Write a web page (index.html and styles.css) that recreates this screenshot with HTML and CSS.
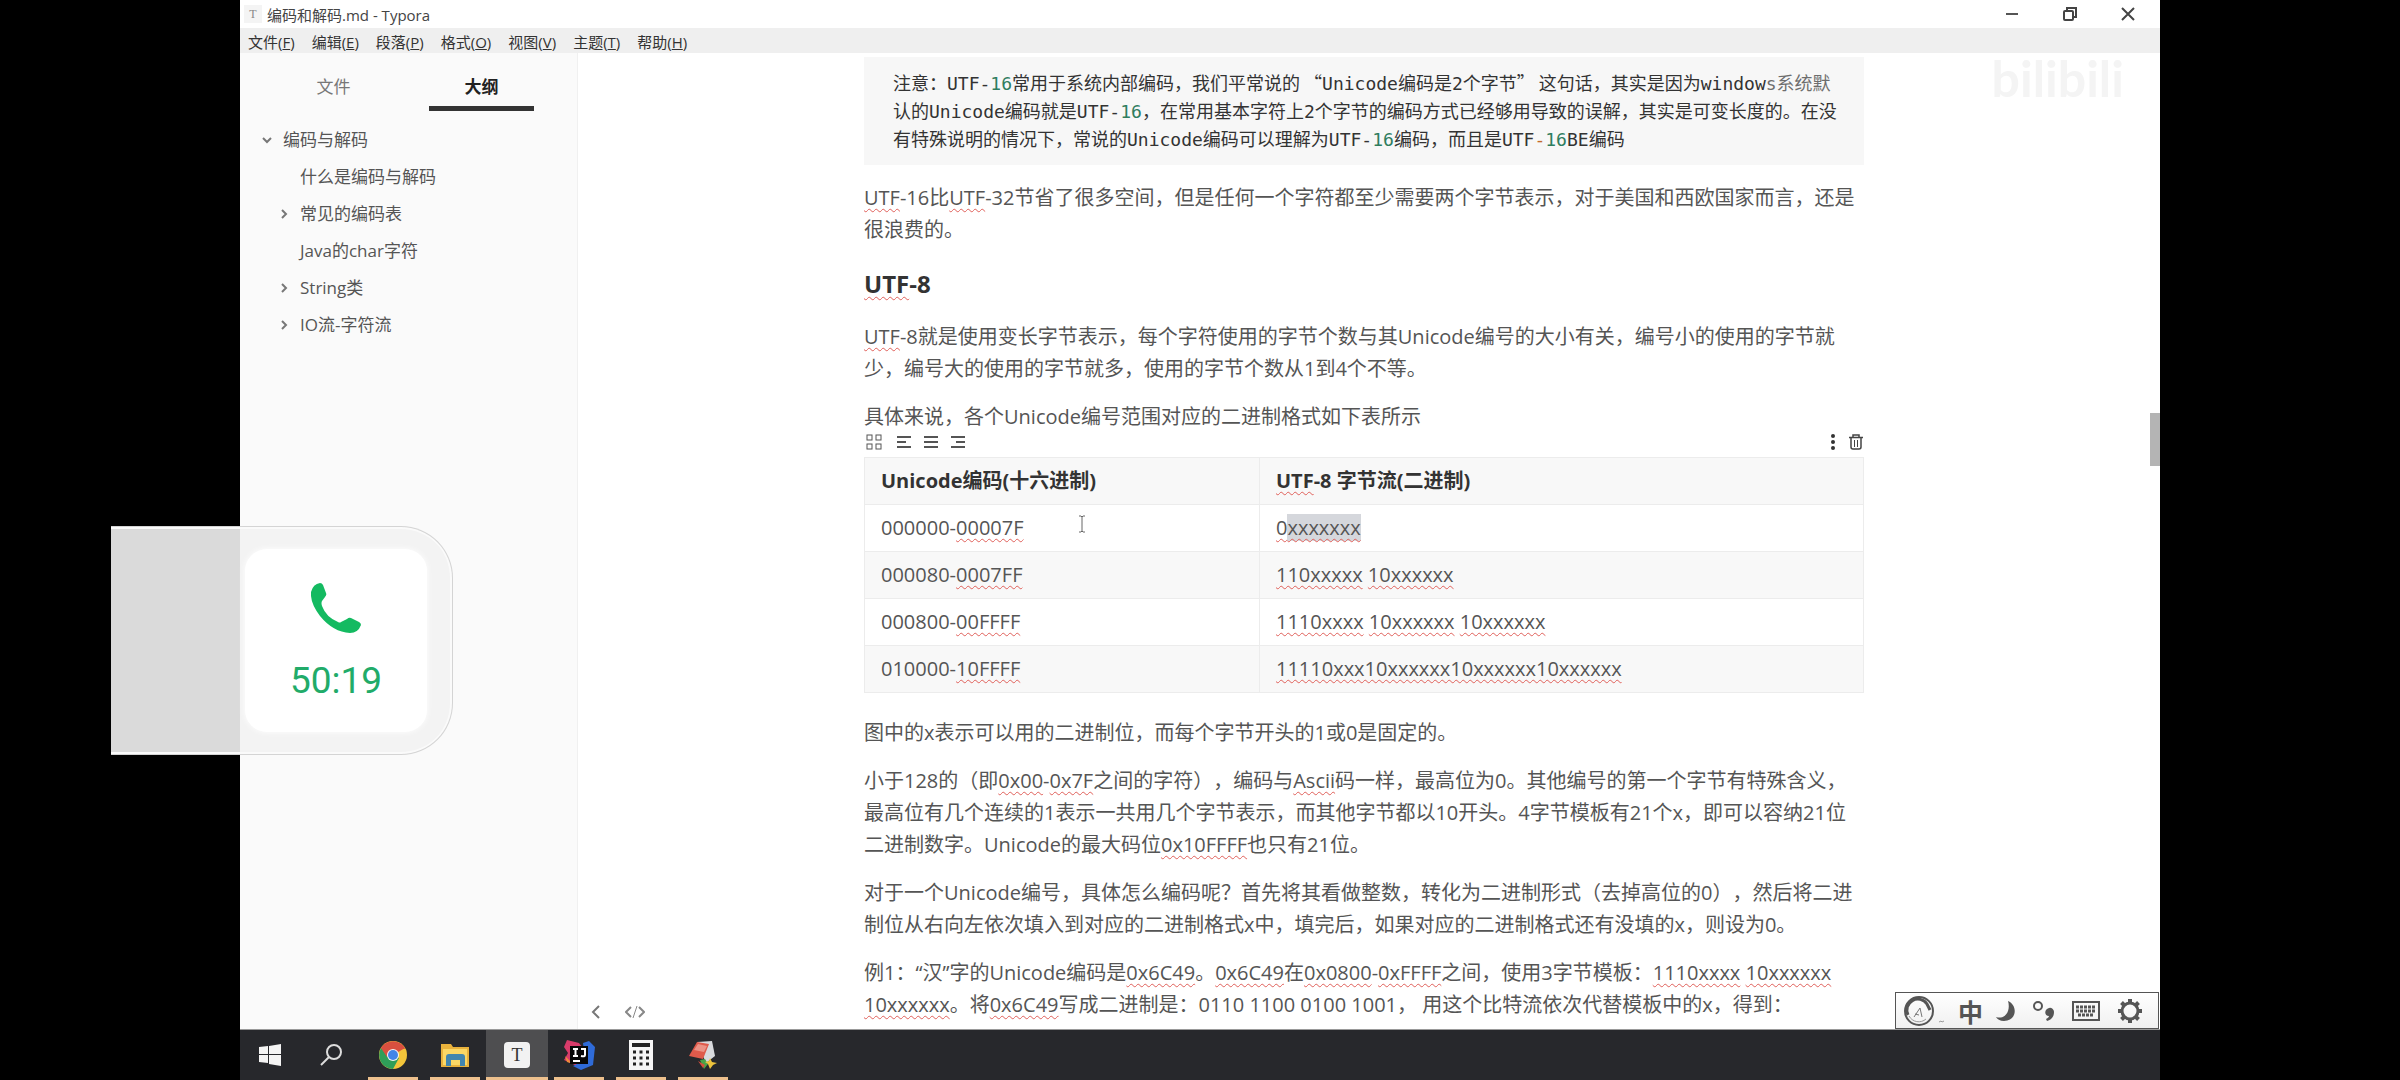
FILE: index.html
```html
<!DOCTYPE html>
<html lang="zh-CN">
<head>
<meta charset="utf-8">
<meta name="viewport" content="width=device-width, initial-scale=1">
<title>编码和解码.md - Typora</title>
<link rel="stylesheet" href="styles.css">
</head>
<body>
<div class="desktop">
  <header class="titlebar">
    <span class="app-icon">T</span>
    <span class="title">编码和解码.md - Typora</span>
    <div class="window-controls">
      <button aria-label="最小化"><svg width="14" height="14" viewBox="0 0 14 14"><path d="M1 7h12" stroke="#555" stroke-width="2"/></svg></button>
      <button aria-label="还原"><svg width="14" height="14" viewBox="0 0 14 14" fill="none" stroke="#444" stroke-width="2"><rect x="1" y="4" width="9" height="9" rx="1"/><path d="M4 4V1h9v9h-3"/></svg></button>
      <button aria-label="关闭"><svg width="14" height="14" viewBox="0 0 14 14"><path d="M1 1l12 12M13 1L1 13" stroke="#444" stroke-width="2"/></svg></button>
    </div>
  </header>
  <nav class="menubar">
    <button>文件(<u>F</u>)</button><button>编辑(<u>E</u>)</button><button>段落(<u>P</u>)</button><button>格式(<u>O</u>)</button><button>视图(<u>V</u>)</button><button>主题(<u>T</u>)</button><button>帮助(<u>H</u>)</button>
  </nav>
  <div class="workspace">
    <aside class="sidebar">
      <div class="tabs">
        <button class="tab">文件</button>
        <button class="tab active">大纲</button>
      </div>
      <nav class="outline">
        <a href="#top"><svg class="chev" viewBox="0 0 10 10"><path d="M1 3l4 4 4-4"/></svg>编码与解码</a>
        <a href="#what" class="child"><span class="chev"></span>什么是编码与解码</a>
        <a href="#tables" class="child"><svg class="chev" viewBox="0 0 10 10"><path d="M3 1l4 4-4 4"/></svg>常见的编码表</a>
        <a href="#char" class="child"><span class="chev"></span>Java的char字符</a>
        <a href="#string" class="child"><svg class="chev" viewBox="0 0 10 10"><path d="M3 1l4 4-4 4"/></svg>String类</a>
        <a href="#io" class="child"><svg class="chev" viewBox="0 0 10 10"><path d="M3 1l4 4-4 4"/></svg>IO流-字符流</a>
      </nav>
    </aside>
    <main class="editor">
      <article class="doc">
        <pre class="code"><code>注意：UTF-<span class="num">16</span>常用于系统内部编码，我们平常说的<span class="quote-open">“</span>Unicode编码是2个字节<span class="quote-close">”</span>这句话，其实是因为window<span class="faded">s系统默</span>认的Unicode编码就是UTF-<span class="num">16</span>，在常用基本字符上2个字节的编码方式已经够用导致的误解，其实是可变长度的。在没有特殊说明的情况下，常说的Unicode编码可以理解为UTF-<span class="num">16</span>编码，而且是UTF<span class="op">-</span><span class="num">16</span>BE编码</code></pre>
        <p><s>UTF</s>-16比<s>UTF</s>-32节省了很多空间，但是任何一个字符都至少需要两个字节表示，对于美国和西欧国家而言，还是很浪费的。</p>
        <h3><s>UTF</s>-8</h3>
        <p><s>UTF</s>-8就是使用变长字节表示，每个字符使用的字节个数与其Unicode编号的大小有关，编号小的使用的字节就少，编号大的使用的字节就多，使用的字节个数从1到4个不等。</p>
        <p class="lead">具体来说，各个Unicode编号范围对应的二进制格式如下表所示</p>
        <div class="table-tools">
          <button aria-label="调整表格"><svg width="16" height="16" viewBox="0 0 16 16" fill="none" stroke="#555" stroke-width="1"><rect x="1" y="1" width="5" height="5"/><rect x="10" y="1" width="5" height="5"/><rect x="1" y="10" width="5" height="5"/><rect x="10" y="10" width="5" height="5"/></svg></button>
          <button class="align-first" aria-label="左对齐"><svg width="16" height="16" viewBox="0 0 16 16" stroke="#555" stroke-width="2"><path d="M1 3h14M1 8h9M1 13h14"/></svg></button>
          <button aria-label="居中"><svg width="16" height="16" viewBox="0 0 16 16" stroke="#555" stroke-width="2"><path d="M1 3h14M1 8h14M1 13h14"/></svg></button>
          <button aria-label="右对齐"><svg width="16" height="16" viewBox="0 0 16 16" stroke="#555" stroke-width="2"><path d="M1 3h14M6 8h9M1 13h14"/></svg></button>
          <span class="spacer"></span>
          <button class="more" aria-label="更多"><svg width="16" height="16" viewBox="0 0 16 16" fill="#333"><circle cx="8" cy="2" r="2"/><circle cx="8" cy="8" r="2"/><circle cx="8" cy="14" r="2"/></svg></button>
          <button aria-label="删除表格"><svg width="16" height="16" viewBox="0 0 16 16" fill="none" stroke="#444"><path d="M1 3.500h14M5 3V1h6v2" stroke-width="1.500"/><path d="M3 4v9q0 2 2 2h6q2 0 2-2V4" stroke-width="1.500"/><path d="M6.500 6v7M9.500 6v7"/></svg></button>
        </div>
        <table>
          <thead><tr><th>Unicode编码(十六进制)</th><th><s>UTF</s>-8 字节流(二进制)</th></tr></thead>
          <tbody>
            <tr><td>000000-<s>00007F</s><svg class="ibeam" width="8" height="18" viewBox="0 0 8 18" fill="none" stroke="#666"><path d="M1 1h2l1 1 1-1h2M4 2v14M1 17h2l1-1 1 1h2"/></svg></td><td><s>0<mark>xxxxxxx</mark></s></td></tr>
            <tr><td>000080-<s>0007FF</s></td><td><s>110xxxxx</s> <s>10xxxxxx</s></td></tr>
            <tr><td>000800-<s>00FFFF</s></td><td><s>1110xxxx</s> <s>10xxxxxx</s> <s>10xxxxxx</s></td></tr>
            <tr><td>010000-<s>10FFFF</s></td><td><s>11110xxx10xxxxxx10xxxxxx10xxxxxx</s></td></tr>
          </tbody>
        </table>
        <p>图中的x表示可以用的二进制位，而每个字节开头的1或0是固定的。</p>
        <p>小于128的（即<s>0x00</s>-<s>0x7F</s>之间的字符），编码与<s>Ascii</s>码一样，最高位为0。其他编号的第一个字节有特殊含义，最高位有几个连续的1表示一共用几个字节表示，而其他字节都以10开头。4字节模板有21个x，即可以容纳21位二进制数字。Unicode的最大码位<s>0x10FFFF</s>也只有21位。</p>
        <p>对于一个Unicode编号，具体怎么编码呢？首先将其看做整数，转化为二进制形式（去掉高位的0），然后将二进制位从右向左依次填入到对应的二进制格式x中，填完后，如果对应的二进制格式还有没填的x，则设为0。</p>
        <p>例1：“汉”字的Unicode编码是<s>0x6C49</s>。<s>0x6C49</s>在<s>0x0800</s>-<s>0xFFFF</s>之间，使用3字节模板：<s>1110xxxx</s> <s>10xxxxxx</s> <s>10xxxxxx</s>。将<s>0x6C49</s>写成二进制是：0110 1100 0100 1001， 用这个比特流依次代替模板中的x，得到：</p>
      </article>
      <div class="scrollbar"><span class="thumb"></span></div>
      <div class="status">
        <button aria-label="收起侧边栏"><svg width="10" height="14" viewBox="0 0 10 14" fill="none" stroke="#777" stroke-width="2"><path d="M8 1L2 7l6 6"/></svg></button>
        <button aria-label="源代码模式"><svg width="20" height="14" viewBox="0 0 20 14" fill="none" stroke="#888" stroke-width="2"><path d="M6 2L1 7l5 5M14 2l5 5-5 5"/><path d="M12 1L8 13" stroke-width="1"/></svg></button>
      </div>
      <div class="watermark">bilibili</div>
      <div class="ime">
        <svg width="44" height="30" viewBox="0 0 44 30" fill="none" stroke="#555"><circle cx="18" cy="15" r="14" stroke-width="2"/><path d="M7 19a11 11 0 0 1 19-11l3 6" stroke-width="3"/><path d="M8 20a11 11 0 0 0 17 3" stroke="#999"/><path d="M13 21l6-9 2 9M14 18l4 1" stroke="#777"/><path d="M38 26l2-1 1 1 2-1" stroke="#999"/></svg>
        <span class="ime-lang">中</span>
        <svg width="20" height="22" viewBox="0 0 20 22" fill="#555"><path d="M12 1c10 4 9 20-4 20-4 0-7-2-8-4 9 3 15-6 12-16z"/></svg>
        <svg width="22" height="22" viewBox="0 0 22 22"><circle cx="5" cy="6" r="4" fill="none" stroke="#555" stroke-width="2"/><path d="M16 8a4 4 0 0 1 5 4c0 5-3 8-7 9l-1-2c2-1 3-2 3-3-5 0-5-7 0-8z" fill="#555"/></svg>
        <svg width="28" height="20" viewBox="0 0 28 20" fill="none" stroke="#555"><rect x="1" y="1" width="26" height="18" stroke-width="2"/><path d="M4 6h20M4 10h20M6 14h16" stroke-width="3" stroke-dasharray="3 1"/></svg>
        <svg width="26" height="26" viewBox="0 0 26 26" fill="none" stroke="#555"><circle cx="13" cy="13" r="8" stroke-width="3"/><path d="M13 1v4M13 21v4M1 13h4M21 13h4M4.500 4.500l3 3M18.500 18.500l3 3M4.500 21.500l3-3M18.500 7.500l3-3" stroke-width="4"/></svg>
      </div>
    </main>
  </div>
  <footer class="taskbar">
    <button class="start" aria-label="开始"><svg width="22" height="22" viewBox="0 0 22 22" fill="#f4f4f4"><path d="M0 3l9-1v8H0zM10 2l12-2v10H10zM0 11h9v8l-9-1zM10 11h12v11l-12-2z"/></svg></button>
    <button aria-label="搜索"><svg width="22" height="22" viewBox="0 0 22 22" fill="none" stroke="#ddd" stroke-width="2"><circle cx="14" cy="8" r="7"/><path d="M9 13l-8 8"/></svg></button>
    <button class="running" aria-label="Chrome"><svg width="28" height="28" viewBox="0 0 28 28"><circle cx="14" cy="14" r="14" fill="#f3c53a"/><path d="M14 14L2 7a14 14 0 0 1 24 0z" fill="#d9503f"/><path d="M2 7a14 14 0 0 0 12 21l6-11-6-3z" fill="#2f9e58"/><path d="M14 8h12a14 14 0 0 0-24-1l6 9z" fill="#d9503f"/><circle cx="14" cy="14" r="6" fill="#f4f4f4"/><circle cx="14" cy="14" r="5" fill="#4285e8"/></svg></button>
    <button class="running" aria-label="文件资源管理器"><svg width="28" height="24" viewBox="0 0 28 24"><path d="M0 1h10l2 3h16v20H0z" fill="#e9b23c"/><path d="M2 6h24v16H2z" fill="#fbd765"/><path d="M5 23v-9q0-3 3-3h13q3 0 3 3v9h-5v-6H10v6z" fill="#4285ae"/></svg></button>
    <button class="running current" aria-label="Typora"><span class="typora">T</span></button>
    <button class="running" aria-label="IntelliJ IDEA"><svg width="32" height="30" viewBox="0 0 32 30"><path d="M4 0l12 3 6 8-8 15L1 20l4-7-4-6z" fill="#d83b6a"/><path d="M20 3l6-2 6 6-2 18-12 5-8-4 12-6z" fill="#2f6bd8"/><path d="M2 16l8 8-6-2z" fill="#ef8b3a"/><path d="M7 6h18v18H7z" fill="#080808"/><path d="M10 9h5M12.500 9v7M10 16h5M18 9h4v6q0 2-4 1M10 21h7" stroke="#fff" stroke-width="2" fill="none"/></svg></button>
    <button class="running" aria-label="计算器"><svg width="24" height="30" viewBox="0 0 24 30"><path d="M0 0h24v30H0z" fill="#f5f5f5"/><path d="M3 3h18v4H3z" fill="#222"/><path d="M4 12h16M4 18h16M4 24h16" stroke="#222" stroke-width="3" stroke-dasharray="3 3.500"/></svg></button>
    <button class="running" aria-label="画图工具"><svg width="28" height="28" viewBox="0 0 28 28"><path d="M8 1l15-1 3 15-9 7z" fill="#d8dadd"/><path d="M8 1l12 2-6 15-14-3z" fill="#df5a4b"/><path d="M9 3l9 2-3 6-10-2z" fill="#ec9386"/><path d="M11 19l5-1 3 5-4 5z" fill="#49a349"/><path d="M9 20l7 4-2 3z" fill="#d64e3b"/><path d="M21 17l2 4 5 1-4 2-3 4-2-5-3-2 4-1z" fill="#edc33c"/></svg></button>
  </footer>
</div>
<button class="call" aria-label="返回通话">
  <span class="call-card">
    <svg width="50" height="50" viewBox="0 0 50 50" fill="#14ba61"><path d="M9 0q2 0 3 2l3 8q1 2-1 4l-3 4q-1 2 0 5 4 11 16 16 2 1 3 0l6-3q2-2 4-1l8 4q2 1 2 3-3 8-11 8Q22 49 9 33-1 20 0 9 2 1 9 0z"/></svg>
    <span class="call-time">50:19</span>
  </span>
</button>
</body>
</html>
```

FILE: styles.css
```css
* { box-sizing: border-box; }
body {
  margin: 0;
  background: #000;
  font-family: "Open Sans", "Noto Sans CJK SC", sans-serif;
  color: #555;
  text-spacing-trim: space-all;
}
button {
  border: 0;
  padding: 0;
  background: none;
  font: inherit;
  color: inherit;
}
svg { display: block; flex: none; }

.desktop {
  margin: 0 10%;
  height: 100vh;
  display: flex;
  flex-direction: column;
  overflow: hidden;
  background: #fff;
}
.titlebar {
  display: flex;
  align-items: center;
  height: 28px;
  padding-left: 4px;
  font-size: 15px;
  color: #444;
}
.app-icon {
  width: 18px;
  height: 18px;
  margin-right: 5px;
  background: #f4f4f4;
  font: 12px/18px "Liberation Serif", serif;
  text-align: center;
  color: #888;
}
.window-controls { display: flex; margin-left: auto; padding-right: 3px; }
.window-controls button { width: 58px; display: grid; place-items: center; }
.menubar {
  display: flex;
  align-items: center;
  gap: 17px;
  height: 25px;
  padding: 2px 8px 0;
  background: #efefef;
  font-size: 15px;
  line-height: 20px;
  color: #333;
}
.menubar button { white-space: nowrap; }
.workspace { flex: 1; min-height: 0; display: flex; }

.sidebar {
  flex: none;
  width: 338px;
  background: #fafafa;
  border-right: 1px solid #f0f0f0;
  font-size: 17px;
}
.tabs { display: flex; gap: 43px; padding: 13px 0 0 41px; }
.tab {
  width: 105px;
  height: 45px;
  padding-bottom: 2px;
  border-bottom: 5px solid transparent;
  color: #777;
}
.tab.active { border-color: #333; color: #222; font-weight: 700; }
.outline { padding: 10px 0 0 22px; }
.outline a {
  display: flex;
  align-items: center;
  gap: 11px;
  line-height: 37px;
  color: #555;
  text-decoration: none;
}
.outline .child { padding-left: 17px; }
.chev { width: 10px; height: 10px; fill: none; stroke: #777; stroke-width: 2; }

.editor {
  position: relative;
  flex: 1;
  min-width: 0;
  display: flex;
  overflow: hidden;
}
.doc {
  width: 100%;
  max-width: 1000px;
  margin: 0 auto;
  padding-top: 4px;
  font-size: 20px;
  line-height: 32px;
}
.doc p { margin: 0 0 16px; }
.doc .lead { margin: 0; }
.doc h3 { margin: 20px 0; font-size: 24px; line-height: 35px; color: #333; }
.doc s { text-decoration: underline wavy #e0605a 1px; text-underline-offset: 3px; text-decoration-skip-ink: none; }
.code {
  margin: 0 0 17px;
  padding: 11px 20px 11px 29px;
  background: #f7f7f7;
  white-space: pre-wrap;
  font: 18px/28px "DejaVu Sans Mono", "Noto Sans CJK SC", monospace;
  color: #333;
}
.code code { font: inherit; }
.num { color: #2f7d5f; }
.op { color: #c46a2c; }
.quote-open, .quote-close { font-family: "Noto Sans CJK SC", sans-serif; }
.quote-open { padding-left: 4px; }
.quote-close { padding-right: 4px; }
.faded { opacity: .7; }

.table-tools { display: flex; gap: 11px; height: 24px; padding: 1px 0 0 2px; }
.table-tools button { width: 16px; height: 16px; }
.table-tools .align-first { margin-left: 3px; }
.table-tools .more { margin-right: -4px; }
.spacer { flex: 1; }
table {
  width: 100%;
  margin-bottom: 24px;
  table-layout: fixed;
  border-collapse: collapse;
}
th, td { padding: 7px 16px; border: 1px solid #ececec; text-align: left; }
th:first-child { width: 395px; }
th { color: #333; }
td:first-child { position: relative; }
thead tr, tbody tr:nth-child(even) { background: #f8f8f8; }
mark { background: #d5d7dc; color: inherit; }
.ibeam { position: absolute; left: 213px; top: 10px; }

.scrollbar { flex: none; width: 10px; padding-top: 360px; }
.thumb { display: block; height: 53px; background: #b4b4b4; }
.status { position: absolute; left: 13px; bottom: 10px; display: flex; gap: 24px; }
.watermark {
  position: absolute;
  top: 0;
  right: 36px;
  font: 700 50px/50px Lato, sans-serif;
  color: #f4f4f4;
}
.ime {
  position: absolute;
  right: 1px;
  bottom: 0;
  display: flex;
  align-items: center;
  gap: 17px;
  width: 264px;
  height: 37px;
  padding: 0 13px 0 5px;
  border: 1px solid #555;
  background: linear-gradient(#fff, #f0f0f0);
}
.ime svg:first-child { margin-right: -4px; }
.ime-lang { font: 700 25px/30px "Noto Sans CJK SC", sans-serif; color: #555; margin-right: -4px; }

.taskbar { display: flex; flex: none; height: 51px; border-top: 1px solid #999; background: #27282c; }
.taskbar button { position: relative; width: 62px; display: grid; place-items: center; }
.taskbar .start { width: 60px; }
.running::after {
  content: "";
  position: absolute;
  left: 6px;
  right: 6px;
  bottom: 0;
  height: 3px;
  background: #edc08d;
}
.current { background: #4e4e50; }
.current::after { left: 0; right: 0; }
.typora {
  width: 26px;
  height: 26px;
  border-radius: 4px;
  background: #f2f2f2;
  font: 18px/26px "Liberation Serif", serif;
  color: #333;
}

.call {
  position: absolute;
  left: 111px;
  top: 526px;
  width: 342px;
  height: 229px;
  padding: 22px 25px 22px 134px;
  border: 1px solid #d4d4d4;
  border-left: 0;
  border-radius: 0 52px 52px 0;
  background: rgba(242, 242, 242, .9);
  background-clip: padding-box;
  box-shadow: inset 0 2px #fafafa, inset 0 -2px #fafafa, inset -2px 0 #fafafa;
}
.call-card {
  display: flex;
  flex-direction: column;
  align-items: center;
  gap: 26px;
  height: 100%;
  padding-top: 34px;
  border-radius: 22px;
  background: #fff;
  box-shadow: 0 0 6px #fff;
}
.call-time { font: 37px/44px Roboto, sans-serif; color: #21ab69; }
```
